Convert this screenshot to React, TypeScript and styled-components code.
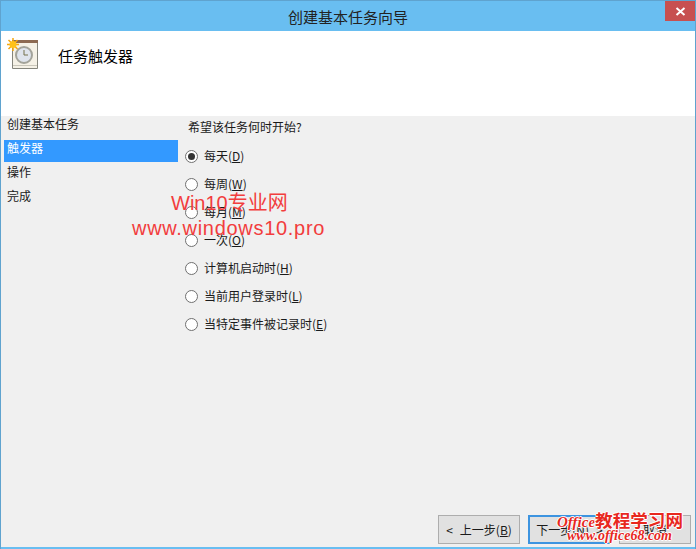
import styled, { createGlobalStyle } from "styled-components";

const GlobalStyle = createGlobalStyle`
  html, body {
    margin: 0;
    padding: 0;
    background: #f0f0f0;
  }
  body {
    font-family: "Noto Sans CJK SC", "Liberation Sans", sans-serif;
    font-size: 12px;
    color: #1a1a1a;
  }
`;

const Window = styled.div`
  position: relative;
  width: 696px;
  height: 549px;
  box-sizing: border-box;
  display: flex;
  flex-direction: column;
  overflow: hidden;
  border: 1px solid #5fa3cf;
  border-bottom: 0;
  background: #f0f0f0;
`;

const TitleBar = styled.div`
  position: relative;
  height: 30px;
  flex: none;
  display: flex;
  align-items: center;
  justify-content: center;
  background: #69bef1;
  font-size: 15px;
  color: #222;
`;

const CloseButton = styled.div`
  position: absolute;
  top: 0;
  right: 0;
  width: 30px;
  height: 20px;
  display: flex;
  align-items: center;
  justify-content: center;
  background: #c75050;
`;

const Header = styled.div`
  height: 85px;
  flex: none;
  box-sizing: border-box;
  padding: 7px 0 0 6px;
  display: flex;
  align-items: flex-start;
  background: #fff;
`;

const HeaderTitle = styled.div`
  margin: 8px 0 0 19px;
  font-size: 15px;
  line-height: 20px;
  color: #000;
`;

const Body = styled.div`
  flex: 1;
  min-height: 0;
  display: flex;
`;

const Sidebar = styled.div`
  width: 174px;
  flex: none;
  margin-left: 3px;
  display: flex;
  flex-direction: column;
`;

const StepItem = styled.div<{ $active?: boolean }>`
  height: ${(p) => (p.$active ? 22 : 24)}px;
  margin-bottom: ${(p) => (p.$active ? 2 : 0)}px;
  box-sizing: border-box;
  padding-left: 3px;
  line-height: 16px;
  background: ${(p) => (p.$active ? "#3399ff" : "transparent")};
  color: ${(p) => (p.$active ? "#fff" : "#1a1a1a")};
`;

const Content = styled.div`
  flex: 1;
  padding: 2px 0 0 7px;
  display: flex;
  flex-direction: column;
`;

const Question = styled.div`
  line-height: 18px;
  margin: 0 0 6px 3px;
`;

const OptionList = styled.div`
  display: flex;
  flex-direction: column;
`;

const OptionRow = styled.div`
  height: 28px;
  display: flex;
  align-items: center;
  gap: 6px;
`;

const OptionLabel = styled.span`
  margin-bottom: 2px;
`;

const Radio = styled.span<{ $checked?: boolean }>`
  width: 11px;
  height: 11px;
  flex: none;
  border: 1px solid #707070;
  border-radius: 50%;
  background: #fff;
  display: flex;
  align-items: center;
  justify-content: center;
  &::after {
    content: "";
    display: ${(p) => (p.$checked ? "block" : "none")};
    width: 7px;
    height: 7px;
    border-radius: 50%;
    background: #333;
  }
`;

const Footer = styled.div`
  height: 32px;
  flex: none;
  box-sizing: border-box;
  display: flex;
  justify-content: flex-end;
  align-items: flex-start;
  gap: 8px;
  padding-right: 4px;
`;

const Button = styled.div<{ $primary?: boolean; $width: number }>`
  width: ${(p) => p.$width}px;
  height: 29px;
  box-sizing: border-box;
  display: flex;
  align-items: center;
  justify-content: center;
  gap: 7px;
  background: #e1e1e1;
  border: ${(p) => (p.$primary ? "2px solid #3d94e0" : "1px solid #adadad")};
`;

const BottomEdge = styled.div`
  height: 2px;
  flex: none;
  background: #69bef1;
`;

const Key = styled.span`
  text-decoration: underline;
`;

const SiteMark = styled.div<{ $x: number; $y: number; $spacing?: number }>`
  position: absolute;
  left: ${(p) => p.$x}px;
  top: ${(p) => p.$y}px;
  font-family: "Liberation Sans", "Noto Sans CJK SC", sans-serif;
  font-size: 20px;
  letter-spacing: ${(p) => p.$spacing ?? 0}px;
  color: #f23d3d;
  white-space: nowrap;
  line-height: 24px;
`;

const OfficeMark = styled.div<{ $x: number; $y: number; $size: number }>`
  position: absolute;
  left: ${(p) => p.$x}px;
  top: ${(p) => p.$y}px;
  font-family: "Liberation Serif", "Noto Sans CJK SC", serif;
  font-size: ${(p) => p.$size}px;
  font-weight: 700;
  color: #e8281e;
  white-space: nowrap;
  line-height: 1.2;
  text-shadow: 1px 0 0 #fff, -1px 0 0 #fff, 0 1px 0 #fff, 0 -1px 0 #fff;
`;

const Slant = styled.span<{ $size?: number }>`
  font-style: italic;
  font-size: ${(p) => p.$size ?? 14}px;
`;

const options: [string, string][] = [
  ["每天", "D"],
  ["每周", "W"],
  ["每月", "M"],
  ["一次", "O"],
  ["计算机启动时", "H"],
  ["当前用户登录时", "L"],
  ["当特定事件被记录时", "E"],
];

const ClockIcon = () => (
  <svg width="32" height="32" viewBox="0 0 32 32">
    <path d="M5.500 2.500h25v28h-25z" fill="#f5f1e6" stroke="#85857c" />
    <path d="M5 2h26v3H5z" fill="#8d6a52" />
    <path d="M6 27.500h24" stroke="#c9c6ba" />
    <circle cx="17" cy="17" r="8" fill="#dfe4ec" stroke="#a3a39a" strokeWidth="2" />
    <path d="M17 12v5h4" stroke="#75704a" fill="none" />
    <path d="M6 0v13M0 6.500h12M1.500 2l9 9M10.500 2l-9 9" stroke="#f5a60f" strokeWidth="1.500" />
    <circle cx="6" cy="6.500" r="3.500" fill="#ffc21a" />
  </svg>
);

export default function App() {
  return (
    <>
      <GlobalStyle />
      <Window>
        <TitleBar>
          创建基本任务向导
          <CloseButton>
            <svg width="11" height="9" viewBox="0 0 11 9">
              <path d="M1.500 1l8 7M9.500 1l-8 7" stroke="#fff" strokeWidth="2" />
            </svg>
          </CloseButton>
        </TitleBar>
        <Header>
          <ClockIcon />
          <HeaderTitle>任务触发器</HeaderTitle>
        </Header>
        <Body>
          <Sidebar>
            <StepItem>创建基本任务</StepItem>
            <StepItem $active>触发器</StepItem>
            <StepItem>操作</StepItem>
            <StepItem>完成</StepItem>
          </Sidebar>
          <Content>
            <Question>希望该任务何时开始?</Question>
            <OptionList>
              {options.map(([label, key], i) => (
                <OptionRow key={key}>
                  <Radio $checked={i === 0} />
                  <OptionLabel>
                    {label}(<Key>{key}</Key>)
                  </OptionLabel>
                </OptionRow>
              ))}
            </OptionList>
          </Content>
        </Body>
        <Footer>
          <Button $width={82}>
            <span>&lt;</span>
            <span>
              上一步(<Key>B</Key>)
            </span>
          </Button>
          <Button $primary $width={83}>
            <span>
              下一步(<Key>N</Key>)
            </span>
            <span>&gt;</span>
          </Button>
          <Button $width={72}>取消</Button>
        </Footer>
        <BottomEdge />
        <SiteMark $x={170} $y={190}>Win10专业网</SiteMark>
        <SiteMark $x={131} $y={215} $spacing={0.7}>www.windows10.pro</SiteMark>
        <OfficeMark $x={556} $y={510} $size={17.6}>
          <Slant $size={15}>Office</Slant>教程学习网
        </OfficeMark>
        <OfficeMark $x={566} $y={527} $size={14}>
          <Slant>www.office68.com</Slant>
        </OfficeMark>
      </Window>
    </>
  );
}
